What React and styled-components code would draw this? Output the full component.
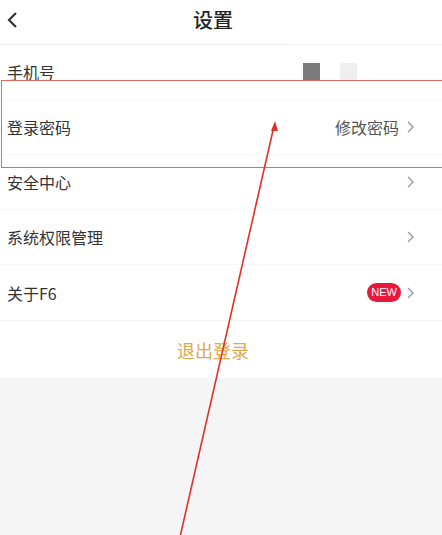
import styled, { createGlobalStyle } from "styled-components";

const GlobalStyle = createGlobalStyle`
  body {
    margin: 0;
    background: #f5f5f5;
    font-family: "Noto Sans CJK SC", "Noto Sans", sans-serif;
  }
`;

const Page = styled.div`
  position: relative;
  width: 442px;
  height: 535px;
  background: #f5f5f5;
  overflow: hidden;
`;

const Header = styled.div`
  position: relative;
  height: 44px;
  background: #fff;
  display: flex;
  align-items: center;
  justify-content: center;
  padding-right: 16px;
`;

const BackButton = styled.div`
  position: absolute;
  left: 6px;
  top: 10px;
  width: 16px;
  height: 20px;
  display: flex;
  align-items: center;
`;

const Title = styled.div`
  font-size: 20px;
  font-weight: 500;
  color: #222;
  line-height: 40px;
  padding-bottom: 4px;
`;

const HeaderDivider = styled.div`
  height: 1px;
  width: 283px;
  background: #ececec;
`;

const List = styled.div`
  background: #fff;
`;

const Row = styled.div`
  height: 55px;
  display: flex;
  align-items: center;
  padding: 0 28px 0 7px;
  border-bottom: ${(p) => (p.$last ? "none" : "1px solid #f7f7f7")};
  box-sizing: border-box;
`;

const Label = styled.div`
  flex: 1;
  font-size: 16px;
  color: #333;
`;

const Value = styled.div`
  font-size: 16px;
  color: #555;
  margin-right: 8px;
`;

const Swatch = styled.div`
  width: 17px;
  height: 18px;
  background: ${(p) => p.$color};
  margin-right: ${(p) => p.$gap}px;
`;

const Badge = styled.div`
  height: 19px;
  padding: 0 4px;
  border-radius: 10px;
  background: #e8173c;
  color: #fff;
  font-family: "Liberation Sans", Arial, sans-serif;
  font-size: 11px;
  line-height: 19px;
  margin-right: 6px;
`;

const Chevron = styled.svg`
  width: 7px;
  height: 12px;
  flex-shrink: 0;
`;

const LogoutBar = styled.div`
  height: 57px;
  background: #fff;
  border-top: 1px solid #f4f4f4;
  display: flex;
  align-items: center;
  justify-content: center;
  padding-right: 16px;
  font-size: 18px;
  color: #e0a94c;
`;

const HighlightBox = styled.div`
  position: absolute;
  left: 1px;
  top: 80px;
  width: 445px;
  height: 86px;
  border: 1.5px solid #e26a62;
  pointer-events: none;
`;

const ArrowLayer = styled.svg`
  position: absolute;
  left: 0;
  top: 0;
  width: 442px;
  height: 535px;
  pointer-events: none;
`;

const Arrow = () => (
  <Chevron viewBox="0 0 7 12">
    <path d="M1 1 L6 6 L1 11" fill="none" stroke="#9a9a9a" strokeWidth="1.4" />
  </Chevron>
);

export default function App() {
  return (
    <Page>
      <GlobalStyle />
      <Header>
        <BackButton>
          <svg width="12" height="18" viewBox="0 0 12 18">
            <path d="M10 2 L3 9 L10 16" fill="none" stroke="#333" strokeWidth="2.2" />
          </svg>
        </BackButton>
        <Title>设置</Title>
      </Header>
      <HeaderDivider />
      <List>
        <Row>
          <Label>手机号</Label>
          <Swatch $color="#7b7b7b" $gap={20} />
          <Swatch $color="#efefef" $gap={57} />
        </Row>
        <Row>
          <Label>登录密码</Label>
          <Value>修改密码</Value>
          <Arrow />
        </Row>
        <Row>
          <Label>安全中心</Label>
          <Arrow />
        </Row>
        <Row>
          <Label>系统权限管理</Label>
          <Arrow />
        </Row>
        <Row $last>
          <Label>关于F6</Label>
          <Badge>NEW</Badge>
          <Arrow />
        </Row>
      </List>
      <LogoutBar>退出登录</LogoutBar>
      <HighlightBox />
      <ArrowLayer viewBox="0 0 442 535">
        <line x1="180" y1="537" x2="274" y2="126" stroke="#e0302a" strokeWidth="1.6" />
        <path d="M275 121 L271 131 L278 131 Z" fill="#e0302a" />
      </ArrowLayer>
    </Page>
  );
}
